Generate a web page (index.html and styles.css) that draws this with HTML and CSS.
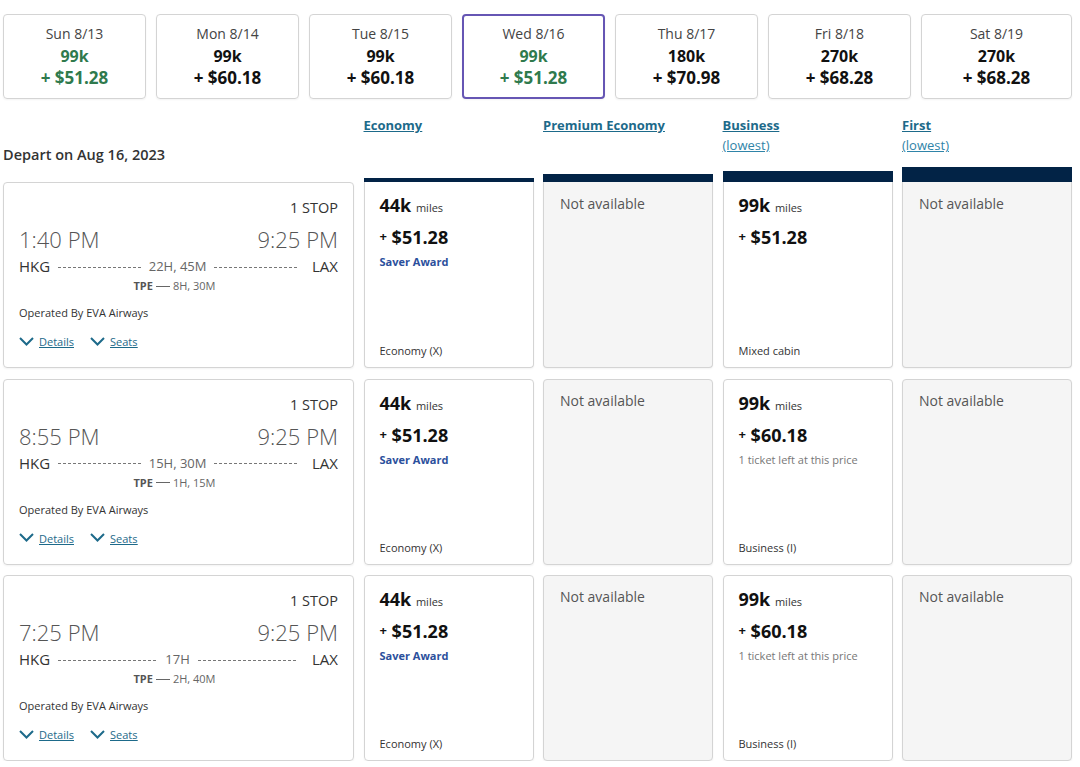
FILE: index.html
```html
<!DOCTYPE html>
<html lang="en">
<head>
<meta charset="UTF-8">
<title>Award search</title>
<link rel="stylesheet" href="styles.css">
</head>
<body>

<!-- Date strip -->
<div class="dates">
    <div class="date">
        <div class="day">Sun 8/13</div>
        <div class="miles green">99k</div>
        <div class="price green">+ $51.28</div>
    </div>
    <div class="date">
        <div class="day">Mon 8/14</div>
        <div class="miles">99k</div>
        <div class="price">+ $60.18</div>
    </div>
    <div class="date">
        <div class="day">Tue 8/15</div>
        <div class="miles">99k</div>
        <div class="price">+ $60.18</div>
    </div>
    <div class="date selected">
        <div class="day">Wed 8/16</div>
        <div class="miles green">99k</div>
        <div class="price green">+ $51.28</div>
    </div>
    <div class="date">
        <div class="day">Thu 8/17</div>
        <div class="miles">180k</div>
        <div class="price">+ $70.98</div>
    </div>
    <div class="date">
        <div class="day">Fri 8/18</div>
        <div class="miles">270k</div>
        <div class="price">+ $68.28</div>
    </div>
    <div class="date">
        <div class="day">Sat 8/19</div>
        <div class="miles">270k</div>
        <div class="price">+ $68.28</div>
    </div>
</div>

<!-- Column headers -->
<div class="grid head">
    <div class="depart">Depart on Aug 16, 2023</div>
    <div class="cabin">
        <a href="#" class="cabin-name">Economy</a>
        <div class="bar bar-1"></div>
    </div>
    <div class="cabin">
        <a href="#" class="cabin-name">Premium Economy</a>
        <div class="bar bar-2"></div>
    </div>
    <div class="cabin">
        <a href="#" class="cabin-name">Business</a>
        <a href="#" class="lowest">(lowest)</a>
        <div class="bar bar-3"></div>
    </div>
    <div class="cabin">
        <a href="#" class="cabin-name">First</a>
        <a href="#" class="lowest">(lowest)</a>
        <div class="bar bar-4"></div>
    </div>
</div>

<!-- Flights -->
<div class="grid rows">
    <!-- Flight 1 -->
    <div class="flight">
        <div class="stops">1 Stop</div>
        <div class="times"><span>1:40 PM</span><span>9:25 PM</span></div>
        <div class="route">
            <span class="airport">HKG</span>
            <span class="dash"></span>
            <span class="duration">22H, 45M</span>
            <span class="dash"></span>
            <span class="airport">LAX</span>
        </div>
        <div class="layover"><b>TPE</b><span class="rule"></span>8H, 30M</div>
        <div class="operator">Operated By EVA Airways</div>
        <div class="links">
            <a href="#"><svg width="15" height="9" viewBox="0 0 15 9"><path d="M1 1l6.5 6.5L14 1" fill="none" stroke="#1d6a8a" stroke-width="2"/></svg><span>Details</span></a>
            <a href="#"><svg width="15" height="9" viewBox="0 0 15 9"><path d="M1 1l6.5 6.5L14 1" fill="none" stroke="#1d6a8a" stroke-width="2"/></svg><span>Seats</span></a>
        </div>
    </div>
    <div class="fare top">
        <div class="fare-miles">44k <small>miles</small></div>
        <div class="fare-price"><sup>+</sup> $51.28</div>
        <div class="saver">Saver Award</div>
        <div class="fare-class">Economy (X)</div>
    </div>
    <div class="fare top empty">Not available</div>
    <div class="fare top">
        <div class="fare-miles">99k <small>miles</small></div>
        <div class="fare-price"><sup>+</sup> $51.28</div>
        <div class="fare-class">Mixed cabin</div>
    </div>
    <div class="fare top empty">Not available</div>

    <!-- Flight 2 -->
    <div class="flight">
        <div class="stops">1 Stop</div>
        <div class="times"><span>8:55 PM</span><span>9:25 PM</span></div>
        <div class="route">
            <span class="airport">HKG</span>
            <span class="dash"></span>
            <span class="duration">15H, 30M</span>
            <span class="dash"></span>
            <span class="airport">LAX</span>
        </div>
        <div class="layover"><b>TPE</b><span class="rule"></span>1H, 15M</div>
        <div class="operator">Operated By EVA Airways</div>
        <div class="links">
            <a href="#"><svg width="15" height="9" viewBox="0 0 15 9"><path d="M1 1l6.5 6.5L14 1" fill="none" stroke="#1d6a8a" stroke-width="2"/></svg><span>Details</span></a>
            <a href="#"><svg width="15" height="9" viewBox="0 0 15 9"><path d="M1 1l6.5 6.5L14 1" fill="none" stroke="#1d6a8a" stroke-width="2"/></svg><span>Seats</span></a>
        </div>
    </div>
    <div class="fare">
        <div class="fare-miles">44k <small>miles</small></div>
        <div class="fare-price"><sup>+</sup> $51.28</div>
        <div class="saver">Saver Award</div>
        <div class="fare-class">Economy (X)</div>
    </div>
    <div class="fare empty">Not available</div>
    <div class="fare">
        <div class="fare-miles">99k <small>miles</small></div>
        <div class="fare-price"><sup>+</sup> $60.18</div>
        <div class="left">1 ticket left at this price</div>
        <div class="fare-class">Business (I)</div>
    </div>
    <div class="fare empty">Not available</div>

    <!-- Flight 3 -->
    <div class="flight">
        <div class="stops">1 Stop</div>
        <div class="times"><span>7:25 PM</span><span>9:25 PM</span></div>
        <div class="route">
            <span class="airport">HKG</span>
            <span class="dash"></span>
            <span class="duration">17H</span>
            <span class="dash"></span>
            <span class="airport">LAX</span>
        </div>
        <div class="layover"><b>TPE</b><span class="rule"></span>2H, 40M</div>
        <div class="operator">Operated By EVA Airways</div>
        <div class="links">
            <a href="#"><svg width="15" height="9" viewBox="0 0 15 9"><path d="M1 1l6.5 6.5L14 1" fill="none" stroke="#1d6a8a" stroke-width="2"/></svg><span>Details</span></a>
            <a href="#"><svg width="15" height="9" viewBox="0 0 15 9"><path d="M1 1l6.5 6.5L14 1" fill="none" stroke="#1d6a8a" stroke-width="2"/></svg><span>Seats</span></a>
        </div>
    </div>
    <div class="fare">
        <div class="fare-miles">44k <small>miles</small></div>
        <div class="fare-price"><sup>+</sup> $51.28</div>
        <div class="saver">Saver Award</div>
        <div class="fare-class">Economy (X)</div>
    </div>
    <div class="fare empty">Not available</div>
    <div class="fare">
        <div class="fare-miles">99k <small>miles</small></div>
        <div class="fare-price"><sup>+</sup> $60.18</div>
        <div class="left">1 ticket left at this price</div>
        <div class="fare-class">Business (I)</div>
    </div>
    <div class="fare empty">Not available</div>
</div>

</body>
</html>
```

FILE: styles.css
```css
/* Award search results */
body {
    font-family: "Open Sans", "Liberation Sans", sans-serif;
    color: #333;
    background-color: #fff;
    margin: 0;
    padding: 14px 8px 0 3px;
}

a {
    color: #1d6a8a;
}

/* Date strip */
.dates {
    display: flex;
    gap: 10px;
}

.date {
    width: 143px;
    height: 85px;
    box-sizing: border-box;
    padding-top: 8px;
    border: 1px solid #d4d4d4;
    border-radius: 4px;
    text-align: center;
    box-shadow: 0 1px 2px rgba(0, 0, 0, 0.05);
}

.date:last-child {
    flex: 1;
}

.date.selected {
    border: 2px solid #6656b4;
    padding-top: 7px;
}

.day {
    font-size: 14px;
    line-height: 22px;
    color: #444;
}

.miles {
    font-size: 16px;
    font-weight: bold;
    line-height: 22px;
    color: #111;
}

.price {
    font-size: 17px;
    font-weight: bold;
    line-height: 22px;
    color: #111;
}

.green {
    color: #2f7a4d;
}

/* Grid */
.grid {
    display: grid;
    grid-template-columns: 351px repeat(4, 1fr);
    column-gap: 9.5px;
}

.head {
    height: 67px;
    margin-top: 16px;
}

.depart {
    align-self: end;
    padding-bottom: 17px;
    font-size: 14.5px;
    font-weight: 600;
    line-height: 20px;
}

.cabin {
    display: flex;
    flex-direction: column;
    align-items: flex-start;
}

.cabin-name {
    font-size: 13px;
    font-weight: bold;
    line-height: 20px;
}

.lowest {
    font-size: 13px;
    line-height: 20px;
    color: #2f84a8;
}

.bar {
    margin-top: auto;
    align-self: stretch;
    background-color: #022346;
}

.bar-1 { height: 4px; }
.bar-2 { height: 8px; }
.bar-3 { height: 11px; }
.bar-4 { height: 15px; }

.rows {
    grid-auto-rows: 186px;
    row-gap: 10.5px;
}

/* Flight card */
.flight {
    border: 1px solid #d4d4d4;
    border-radius: 4px;
    padding: 13px 15px 0 15px;
    box-shadow: 0 1px 2px rgba(0, 0, 0, 0.05);
}

.stops {
    text-align: right;
    text-transform: uppercase;
    font-size: 14.5px;
    line-height: 24px;
}

.times {
    display: flex;
    justify-content: space-between;
    font-size: 22px;
    font-weight: 300;
    line-height: 30px;
    color: #555;
    margin-top: 4px;
}

.route {
    display: flex;
    align-items: center;
    font-size: 15px;
    line-height: 22px;
    margin-top: 1px;
}

.dash {
    flex: 1;
    height: 1px;
    margin: 2px 8px 0 8px;
    background: repeating-linear-gradient(to right, #777 0 3px, transparent 3px 5px);
}

.duration {
    font-size: 13px;
    color: #666;
}

.route .airport:last-child {
    margin-left: 7px;
}

.layover {
    display: flex;
    align-items: center;
    justify-content: center;
    font-size: 11px;
    line-height: 16px;
    color: #666;
    margin-left: -8px;
    margin-top: 1px;
}

.layover b {
    color: #555;
}

.rule {
    width: 14px;
    height: 1px;
    background-color: #666;
    margin: 0 3px;
}

.operator {
    font-size: 11px;
    line-height: 16px;
    margin-top: 11px;
}

.links {
    display: flex;
    gap: 16px;
    margin-top: 13px;
    font-size: 11px;
    line-height: 16px;
}

.links a {
    display: flex;
    align-items: center;
    gap: 5px;
}

.links a svg {
    margin-top: -2px;
}

.links a span {
    text-decoration: underline;
}

/* Fare cells */
.fare {
    display: flex;
    flex-direction: column;
    align-items: flex-start;
    border: 1px solid #d4d4d4;
    border-radius: 4px;
    padding: 12px 15px 8px 15px;
    box-shadow: 0 1px 2px rgba(0, 0, 0, 0.05);
}

.fare.top {
    border-top: none;
    border-radius: 0 0 4px 4px;
    padding-top: 12px;
}

.fare.empty {
    background-color: #f5f5f5;
    font-size: 14px;
    line-height: 20px;
    color: #555;
    padding-left: 16px;
    padding-top: 11px;
}

.fare.top.empty {
    padding-top: 12px;
}

.fare-miles {
    font-size: 18px;
    font-weight: bold;
    line-height: 22px;
    color: #111;
}

.fare-miles small {
    font-size: 11px;
    font-weight: normal;
    color: #333;
}

.fare-price {
    font-size: 18px;
    font-weight: bold;
    line-height: 22px;
    margin-top: 6px;
    color: #111;
}

.fare-price sup {
    font-size: 13px;
    vertical-align: 3px;
}

.saver {
    font-size: 11px;
    font-weight: bold;
    line-height: 16px;
    color: #2b4f9c;
    margin-top: 6px;
}

.left {
    font-size: 11px;
    line-height: 16px;
    color: #777;
    margin-top: 6px;
}

.fare-class {
    margin-top: auto;
    font-size: 11px;
    line-height: 16px;
}
```
